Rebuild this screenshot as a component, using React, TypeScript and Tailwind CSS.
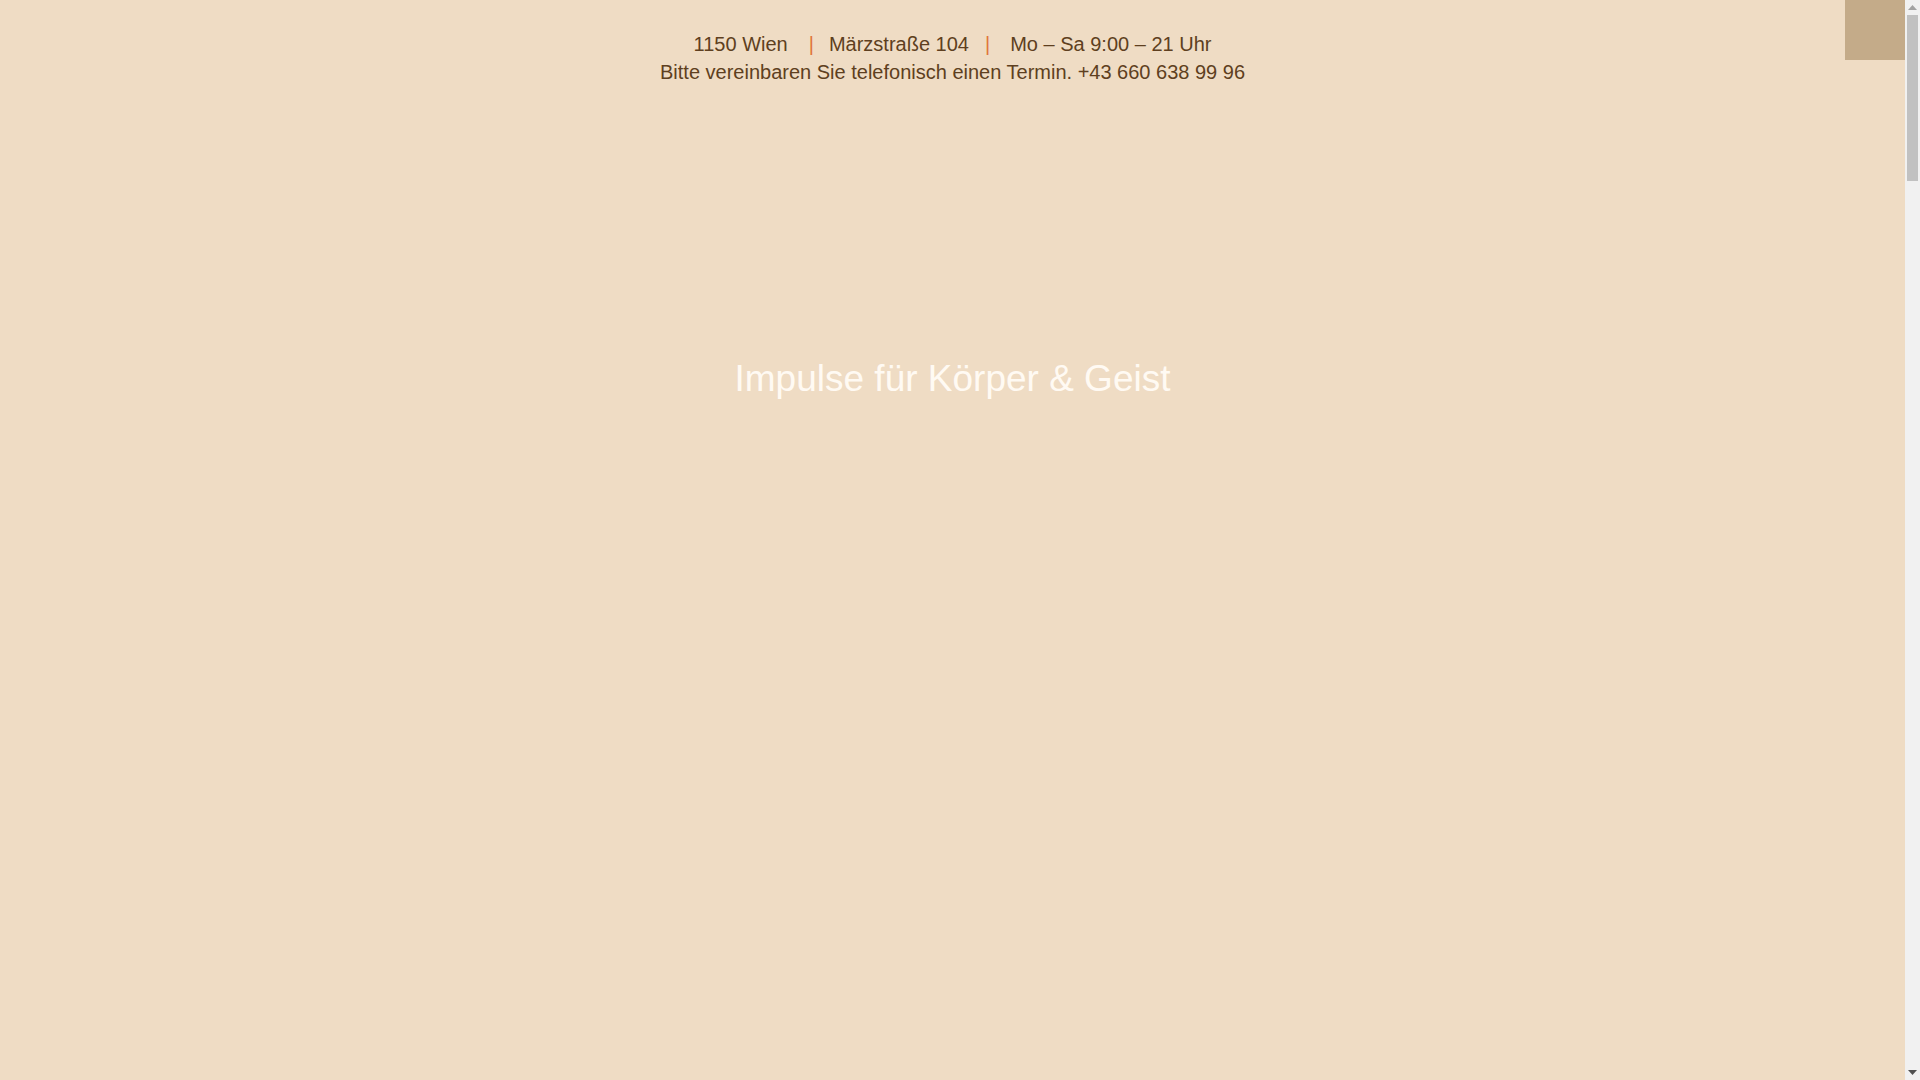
import React from 'react';

const sans = { fontFamily: '"Liberation Sans", Arial, sans-serif' };

function TopInfo() {
  return (
    <header className="pt-[30px] text-center text-[20px] leading-[28px] text-[#5e3f20]">
      <div className="flex justify-center">
        <span>1150 Wien</span>
        <span className="ml-[21px] mr-[15px] text-[#e0763a]">|</span>
        <span>Märzstraße 104</span>
        <span className="ml-[16px] mr-[20px] text-[#e0763a]">|</span>
        <span>Mo – Sa 9:00 – 21 Uhr</span>
      </div>
      <div>Bitte vereinbaren Sie telefonisch einen Termin. +43 660 638 99 96</div>
    </header>
  );
}

// browser scrollbar as seen in the screenshot
function Scrollbar() {
  return (
    <div className="sticky top-0 flex h-screen w-[15px] shrink-0 flex-col bg-[#f1f1f1]">
      <div className="flex h-[15px] items-center justify-center">
        <svg width="9" height="5" viewBox="0 0 9 5">
          <path d="M4.5 0 L9 5 L0 5 Z" fill="#a3a3a3" />
        </svg>
      </div>
      <div className="flex-1 px-[2px]">
        <div className="h-[166px] bg-[#c1c1c1]" />
      </div>
      <div className="flex h-[15px] items-center justify-center">
        <svg width="9" height="5" viewBox="0 0 9 5">
          <path d="M0 0 L9 0 L4.5 5 Z" fill="#505050" />
        </svg>
      </div>
    </div>
  );
}

export default function App() {
  return (
    <div className="flex items-start bg-[#efdcc4]" style={sans}>
      <main className="relative min-h-[6830px] flex-1">
        {/* menu toggle */}
        <button className="fixed right-[15px] top-0 z-10 h-[60px] w-[60px] bg-[#c4ab89]" aria-label="Menü" />

        <TopInfo />

        {/* Hero */}
        <section className="pt-[273px]">
          <h1 className="text-center text-[37px] font-normal leading-[40px] text-[#fffaf3]">
            Impulse für Körper &amp; Geist
          </h1>
        </section>
      </main>
      <Scrollbar />
    </div>
  );
}
